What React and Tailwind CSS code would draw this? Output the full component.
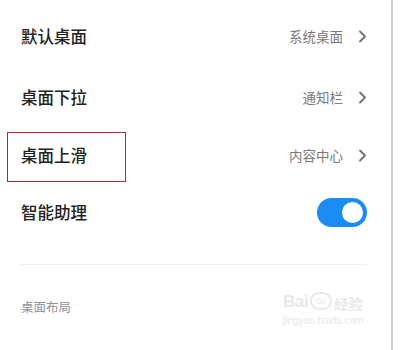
const font = { fontFamily: '"Noto Sans CJK SC", "Noto Sans", sans-serif' };

function Chevron() {
  return (
    <svg width="9" height="13" viewBox="0 0 9 13" className="ml-[15px]">
      <polyline points="2,1.5 7,6.5 2,11.5" fill="none" stroke="#6f6f6f" strokeWidth="1.8" strokeLinecap="round" strokeLinejoin="round" />
    </svg>
  );
}

function Row({ title, value, h, boxed, children }) {
  return (
    <div className={`relative flex items-center justify-between pl-[21px] pr-[24px] ${h}`}>
      <span className="text-[16.5px] font-medium text-[#222]">{title}</span>
      {value && (
        <div className="flex items-center">
          <span className="text-[13.5px] text-[#7a7a7a]">{value}</span>
          <Chevron />
        </div>
      )}
      {children}
      {boxed && <div className="absolute left-[7px] top-[4px] w-[119px] h-[50px] border border-[#b0262b]" />}
    </div>
  );
}

export default function App() {
  return (
    <div className="w-[400px] h-[350px] bg-white flex overflow-hidden" style={font}>
      <div className="relative w-[391px] h-full pt-[6px]">
        <Row title="默认桌面" value="系统桌面" h="h-[60px]" />
        <Row title="桌面下拉" value="通知栏" h="h-[62px]" />
        <Row title="桌面上滑" value="内容中心" h="h-[54px]" boxed />
        <div className="flex items-center justify-between pl-[21px] pr-[24px] h-[60px]">
          <span className="text-[16.5px] font-medium text-[#222]">智能助理</span>
          <div className="flex items-center justify-end w-[50px] h-[29px] rounded-full bg-[#1a8cf2] pr-[4px]">
            <div className="w-[21px] h-[21px] rounded-full bg-white" />
          </div>
        </div>
        <div className="mt-[22px] ml-[20px] mr-[24px] h-px bg-[#f0f0f0]" />
        <div className="mt-[33px] pl-[21px] text-[12.5px] text-[#8a909c]">桌面布局</div>

        {/* watermark */}
        <div className="absolute left-[283px] top-[292px] text-[#e8e8e8] leading-none">
          <div className="flex items-end gap-[2px]">
            <span className="text-[17px] font-bold tracking-tight" style={{ fontFamily: '"Liberation Sans", sans-serif' }}>Bai</span>
            <span className="w-[22px] h-[18px] rounded-full border-2 border-[#e8e8e8] text-[8px] flex items-center justify-center">du</span>
            <span className="text-[14px] font-bold">经验</span>
          </div>
          <div className="mt-[6px] text-[10px]" style={{ fontFamily: '"Liberation Sans", sans-serif' }}>jingyan.baidu.com</div>
        </div>
      </div>
      <div className="w-[2px] h-full bg-[#cfcfcf]" />
      <div className="flex-1 bg-white" />
    </div>
  );
}
